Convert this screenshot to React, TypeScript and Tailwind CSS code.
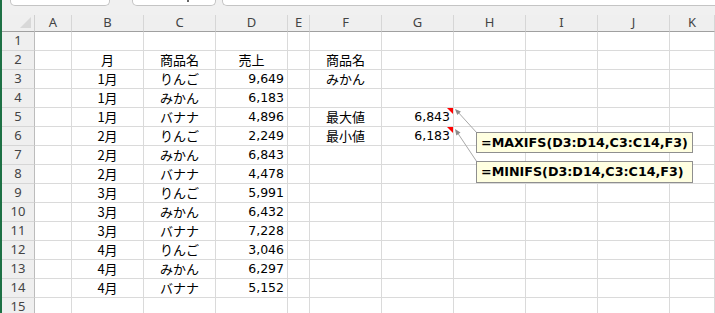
import React from "react";

const cols = ["A", "B", "C", "D", "E", "F", "G", "H", "I", "J", "K"];
const colTemplate = "grid-cols-[33px_37px_72px_72px_72px_22px_72px_72px_72px_72px_72px_1fr]";

type Row = { b?: string; c?: string; d?: string; f?: string; g?: string; red?: boolean };

const rows: Row[] = [
  {},
  { b: "月", c: "商品名", d: "売上", f: "商品名" },
  { b: "1月", c: "りんご", d: "9,649", f: "みかん" },
  { b: "1月", c: "みかん", d: "6,183" },
  { b: "1月", c: "バナナ", d: "4,896", f: "最大値", g: "6,843", red: true },
  { b: "2月", c: "りんご", d: "2,249", f: "最小値", g: "6,183", red: true },
  { b: "2月", c: "みかん", d: "6,843" },
  { b: "2月", c: "バナナ", d: "4,478" },
  { b: "3月", c: "りんご", d: "5,991" },
  { b: "3月", c: "みかん", d: "6,432" },
  { b: "3月", c: "バナナ", d: "7,228" },
  { b: "4月", c: "りんご", d: "3,046" },
  { b: "4月", c: "みかん", d: "6,297" },
  { b: "4月", c: "バナナ", d: "5,152" },
  {},
];

const jp = "font-['Noto_Sans_CJK_JP','Noto_Sans',sans-serif] text-[13px] text-black";
const num = "font-['DejaVu_Sans',sans-serif] text-[12.5px] text-black";
const hdr = "font-['Noto_Sans',sans-serif] text-[13px] text-[#444]";

function Cell({ children, className = "" }: { children?: React.ReactNode; className?: string }) {
  return (
    <div className={`relative h-[19px] border-r border-b border-[#dadada] bg-white flex items-center overflow-visible whitespace-nowrap ${className}`}>
      {children}
    </div>
  );
}

export default function App() {
  return (
    <div className="relative w-[715px] h-[313px] overflow-hidden bg-[#f0f0f0] flex">
      <div className="w-[2px] h-full bg-[#1e7145] shrink-0" />
      <div className="flex-1 flex flex-col min-w-0">
        {/* formula bar remnants */}
        <div className="h-[15px] shrink-0 flex items-start">
          <div className="ml-[8px] w-[100px] h-[6px] bg-white border border-t-0 border-[#c4c4c4] rounded-b-[5px]" />
          <div className="relative ml-[22px] w-[84px] h-[6px] bg-white border border-t-0 border-[#c4c4c4] rounded-b-[5px]">
            <div className="absolute left-[54px] top-0 w-[2px] h-[2px] bg-[#666]" />
          </div>
          <div className="ml-[6px] flex-1 h-[6px] bg-white border border-t-0 border-r-0 border-[#c4c4c4] rounded-bl-[5px]" />
        </div>
        {/* grid */}
        <div className={`grid ${colTemplate}`}>
          {/* header row */}
          <div className="relative h-[17px] bg-[#efefef] border-r border-b border-r-[#d0d0d0] border-b-[#a0a0a0]">
            <svg className="absolute left-[18px] top-[2px]" width="12" height="12" viewBox="0 0 12 12">
              <polygon points="11,0 11,11 0,11" fill="#d8d8d8" />
            </svg>
          </div>
          {cols.map((c) => (
            <div
              key={c}
              className={`h-[17px] bg-[#efefef] border-r border-b border-r-[#d6d6d6] border-b-[#a0a0a0] flex items-center justify-center ${hdr}`}
            >
              {c}
            </div>
          ))}
          {rows.map((r, i) => (
            <React.Fragment key={i}>
              <div className={`h-[19px] bg-[#efefef] border-r border-b border-r-[#bcbcbc] border-b-[#d6d6d6] flex items-center justify-center ${hdr}`}>
                {i + 1}
              </div>
              <Cell />
              <Cell className={`justify-center ${jp}`}>{r.b}</Cell>
              <Cell className={`justify-center ${jp}`}>{r.c}</Cell>
              <Cell className={i === 1 ? `justify-center ${jp}` : `justify-end pr-[3px] ${num}`}>{r.d}</Cell>
              <Cell />
              <Cell className={`justify-center ${jp}`}>{r.f}</Cell>
              <Cell className={`justify-end pr-[3px] ${num}`}>
                {r.g}
                {r.red && (
                  <svg className="absolute right-0 top-0" width="6" height="6" viewBox="0 0 6 6">
                    <polygon points="0,0 6,0 6,6" fill="#ff0000" />
                  </svg>
                )}
              </Cell>
              <Cell />
              <Cell />
              <Cell />
              <Cell />
            </React.Fragment>
          ))}
        </div>
      </div>

      {/* comment connectors */}
      <svg className="absolute left-0 top-0 pointer-events-none" width="715" height="313" viewBox="0 0 715 313">
        <line x1="457" y1="111" x2="477" y2="133" stroke="#a8a8a8" strokeWidth="1" />
        <polygon points="455,109 460.9,111.6 457.3,115" fill="#8c8c8c" />
        <line x1="457" y1="132" x2="477" y2="162" stroke="#a8a8a8" strokeWidth="1" />
        <polygon points="455,129 460.5,132.6 456.3,135.4" fill="#8c8c8c" />
      </svg>

      {/* comment boxes */}
      <div className="absolute left-[476px] top-[132px] w-[217px] h-[21px] bg-[#ffffe1] border border-[#8f8f8f] flex items-center pl-[4px] font-['DejaVu_Sans',sans-serif] font-bold text-[12.7px] text-black whitespace-nowrap">
        =MAXIFS(D3:D14,C3:C14,F3)
      </div>
      <div className="absolute left-[476px] top-[161px] w-[217px] h-[22px] bg-[#ffffe1] border border-[#8f8f8f] flex items-center pl-[4px] font-['DejaVu_Sans',sans-serif] font-bold text-[12.7px] text-black whitespace-nowrap">
        =MINIFS(D3:D14,C3:C14,F3)
      </div>
    </div>
  );
}
